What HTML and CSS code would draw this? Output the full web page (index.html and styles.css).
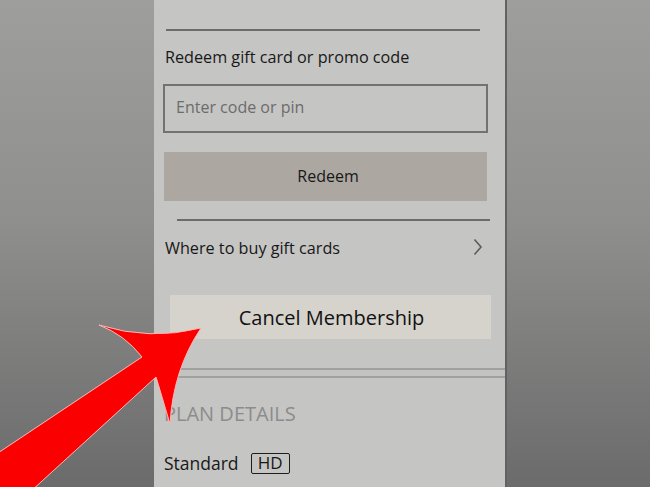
FILE: index.html
```html
<!DOCTYPE html>
<html lang="en">
<head>
<meta charset="utf-8">
<title>Redeem</title>
<link rel="stylesheet" href="styles.css">
</head>
<body>
<div class="stage">
  <main class="panel">
    <hr class="rule rule-top">
    <p class="label">Redeem gift card or promo code</p>
    <div class="input">Enter code or pin</div>
    <div class="btn redeem">Redeem</div>
    <hr class="rule rule-mid">
    <div class="row">
      <span>Where to buy gift cards</span>
      <svg class="chev" width="10" height="18" viewBox="0 0 10 18"><path d="M1.5 1.5 L8 9 L1.5 16.5" fill="none" stroke="#5c5c5c" stroke-width="1.6"/></svg>
    </div>
    <div class="btn cancel">Cancel Membership</div>
    <div class="double"></div>
    <h2 class="section">PLAN DETAILS</h2>
    <div class="plan"><span>Standard</span><span class="hd">HD</span></div>
  </main>
  <svg class="arrow" width="650" height="487" viewBox="0 0 650 487">
    <path d="M-5 455 L142 357 Q125 335 99 325 Q150 341 201 328 Q173 370 170 424 Q160 390 156 377 L30 492 L-5 492 Z" fill="#fb0000" stroke="#ffb4b4" stroke-width="1"/>
  </svg>
</div>
</body>
</html>
```
FILE: styles.css
```css
* { box-sizing: border-box; }
html, body { margin: 0; padding: 0; }
body { font-family: "Open Sans", "Noto Sans", sans-serif; }

.stage {
  position: relative;
  width: 650px;
  height: 487px;
  overflow: hidden;
  display: flex;
  background: linear-gradient(to bottom, #9e9e9c 0%, #8f8f8e 45%, #6b6b6b 100%);
}

.panel {
  margin-left: 154px;
  width: 353px;
  height: 100%;
  background: #c5c5c3;
  border-right: 2px solid #626262;
  display: flex;
  flex-direction: column;
  align-items: flex-start;
  color: #181818;
}

.rule {
  border: 0;
  height: 2px;
  background: #6c6c6c;
  margin: 0;
}
.rule-top { margin: 29px 0 0 12px; width: 314px; }
.rule-mid { margin: 18px 0 0 23px; width: 313px; }

.label {
  margin: 15px 0 0 11px;
  font-size: 16.2px;
  line-height: 22px;
}

.input {
  margin: 16px 0 0 9px;
  width: 325px;
  height: 49px;
  border: 2px solid #727272;
  padding: 0 0 3px 11px;
  display: flex;
  align-items: center;
  font-size: 16px;
  color: #6c6c6c;
}

.btn {
  display: flex;
  align-items: center;
  justify-content: center;
}
.redeem {
  margin: 19px 0 0 10px;
  width: 323px;
  height: 49px;
  background: #aca8a1;
  font-size: 16px;
  padding: 0 0 1px 5px;
}

.row {
  margin: 16px 0 0 11px;
  width: 319px;
  display: flex;
  justify-content: space-between;
  align-items: center;
  font-size: 16.2px;
  line-height: 22px;
}
.chev { margin: -3px 1px 0 0; }

.cancel {
  margin: 36px 0 0 16px;
  width: 321px;
  height: 44px;
  background: #d6d3cd;
  font-size: 20px;
  color: #111;
  padding-left: 2px;
}

.double {
  margin-top: 29px;
  width: 100%;
  height: 10px;
  border-top: 2px solid #a0a09e;
  border-bottom: 2px solid #a0a09e;
  background: #c3c3c1;
}

.section {
  margin: 23px 0 0 10px;
  font-size: 20px;
  line-height: 26px;
  font-weight: 400;
  color: #8c8c8c;
}

.plan {
  margin: 25px 0 0 10px;
  display: flex;
  align-items: center;
  gap: 12px;
  font-size: 17.5px;
  line-height: 22px;
}
.hd {
  border: 1.5px solid #1e1e1e;
  border-radius: 2px;
  width: 39px;
  height: 21px;
  display: flex;
  align-items: center;
  justify-content: center;
  font-size: 17px;
}

.arrow {
  position: absolute;
  left: 0;
  top: 0;
  pointer-events: none;
}
```
